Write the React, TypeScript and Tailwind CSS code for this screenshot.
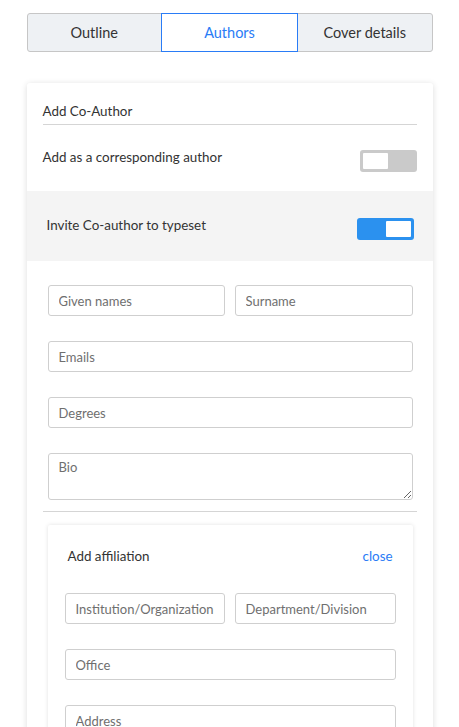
import React from "react";

const font = { fontFamily: 'Lato, "Noto Sans", "Liberation Sans", sans-serif' };

function Toggle({ on }: { on: boolean }) {
  if (on) {
    return (
      <div className="flex h-[22px] w-[57px] shrink-0 items-center justify-end rounded-[3px] bg-[#2b91ef] pr-[3px]">
        <div className="h-[16px] w-[25px] rounded-[1px] bg-white" />
      </div>
    );
  }
  return (
    <div className="flex h-[22px] w-[57px] shrink-0 items-center rounded-[3px] bg-[#cacaca] pl-[3px]">
      <div className="h-[16px] w-[25px] rounded-[1px] bg-white" />
    </div>
  );
}

function Field({ label, className = "" }: { label: string; className?: string }) {
  return (
    <input
      placeholder={label}
      className={
        "block h-[31px] min-w-0 rounded-[3px] border border-[#cfcfcf] bg-white px-[10px] text-[13px] text-[#333] placeholder:text-[#6f6f6f] outline-none " +
        className
      }
    />
  );
}

export default function App() {
  return (
    <div className="min-h-[727px] bg-white text-[#333] text-[13.4px] leading-[16px]" style={font}>
      <div className="mx-auto w-[406px] pt-[13px]">
        <div className="flex h-[39px] rounded-[3px] border border-[#c6c6c6] bg-[#eef1f4] text-[14.5px]">
          <div className="flex flex-1 items-center justify-center text-[#333]">Outline</div>
          <div className="-my-px flex w-[137px] bg-[#2a7cf6] p-px">
            <div className="flex flex-1 items-center justify-center bg-white text-[#2a7cf6]">Authors</div>
          </div>
          <div className="flex flex-1 items-center justify-center text-[#333]">Cover details</div>
        </div>

        <div className="mt-[31px] rounded-[3px] bg-white shadow-[0_1px_6px_rgba(0,0,0,0.14)]">
          <div className="px-4 pt-[20px]">
            <div className="border-b border-[#d5d5d5] pb-[5px]">Add Co-Author</div>
            <div className="flex items-start justify-between pt-[25px] pb-[19px]">
              <span className="-mt-px">Add as a corresponding author</span>
              <Toggle on={false} />
            </div>
          </div>

          <div className="flex h-[70px] items-start justify-between bg-[#f4f4f4] pt-[27px] pl-5 pr-[19px]">
            <span className="-mt-[1px]">Invite Co-author to typeset</span>
            <Toggle on={true} />
          </div>

          <div className="flex flex-col gap-[25px] pt-[24px] pl-[21px] pr-5">
            <div className="flex gap-[10px]">
              <Field label="Given names" className="w-[177px]" />
              <Field label="Surname" className="flex-1" />
            </div>
            <Field label="Emails" className="w-full" />
            <Field label="Degrees" className="w-full" />
            <textarea
              placeholder="Bio"
              className="block h-[47px] w-full rounded-[3px] border border-[#cfcfcf] bg-white px-[10px] pt-[5px] text-[13px] placeholder:text-[#6f6f6f] outline-none"
            />
          </div>

          <div className="px-4 pt-[11px]">
            <div className="border-t border-[#d5d5d5]" />
          </div>

          <div className="mt-[13px] ml-[21px] mr-5 rounded-[2px] bg-white shadow-[0_0_4px_rgba(0,0,0,0.12)]">
            <div className="flex items-center justify-between px-5 pt-[23px]">
              <span>Add affiliation</span>
              <span className="text-[#2a7cf6]">close</span>
            </div>
            <div className="flex flex-col gap-[25px] px-[17px] pt-[29px] pb-6">
              <div className="flex gap-[10px]">
                <Field label="Institution/Organization" className="w-[160px]" />
                <Field label="Department/Division" className="flex-1" />
              </div>
              <Field label="Office" className="w-full" />
              <Field label="Address" className="w-full" />
            </div>
          </div>
        </div>
      </div>
    </div>
  );
}
